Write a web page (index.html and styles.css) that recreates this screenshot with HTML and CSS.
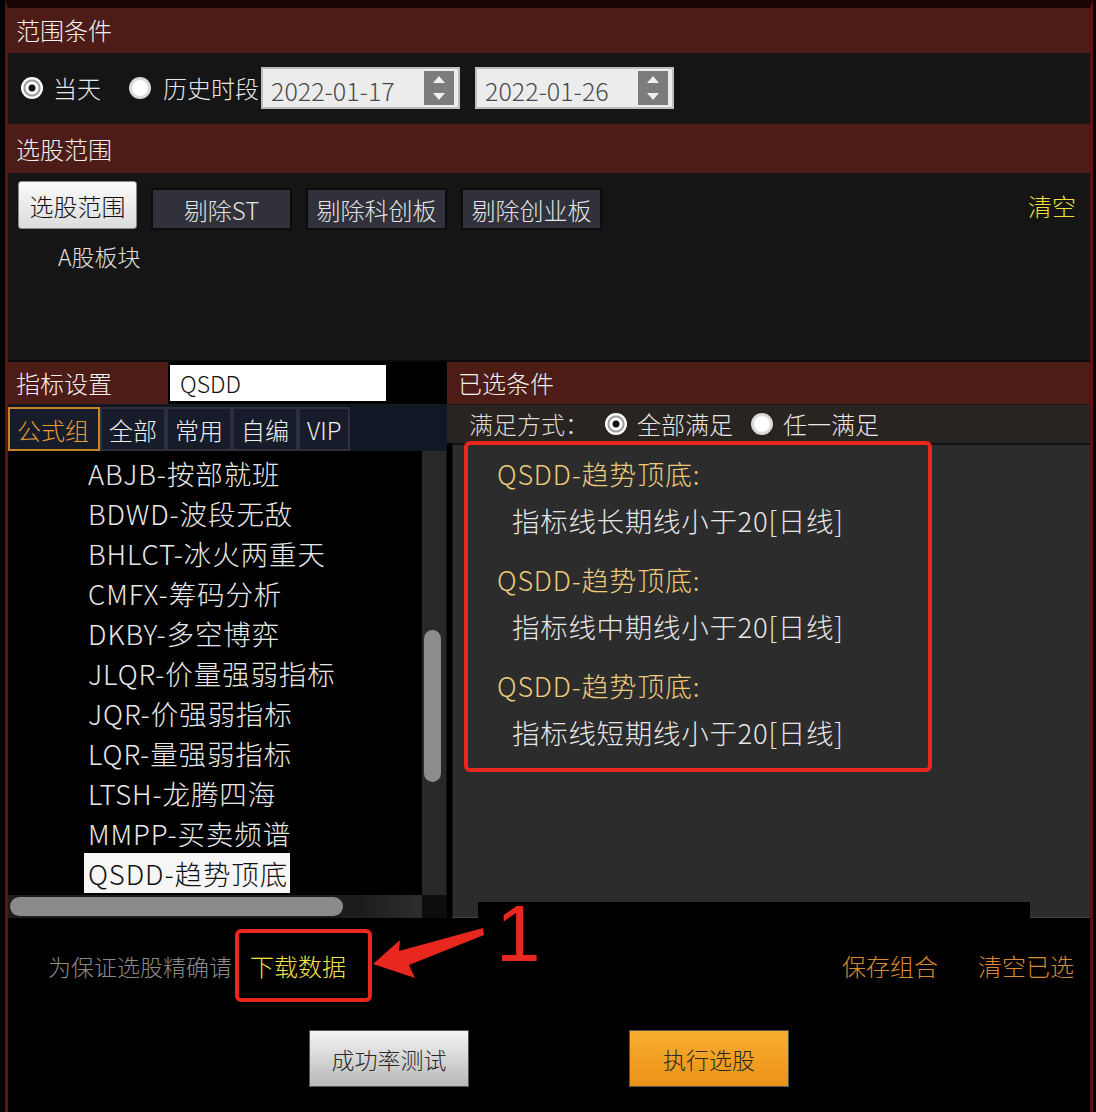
FILE: index.html
```html
<!DOCTYPE html>
<html lang="zh-CN">
<head>
    <meta charset="UTF-8">
    <meta name="viewport" content="width=device-width, initial-scale=1.0">
    <title>条件选股</title>
    <link rel="stylesheet" href="styles.css">
</head>
<body>
    <div class="frame">
        <div class="sec-head first">范围条件</div>
        <div class="date-row">
            <span class="radio on"></span><span class="radio-text">当天</span>
            <span class="radio"></span><span class="radio-text">历史时段</span>
            <div class="date">
                <span class="date-value">2022-01-17</span>
                <span class="spin"><i class="up"></i><i class="down"></i></span>
            </div>
            <div class="date">
                <span class="date-value">2022-01-26</span>
                <span class="spin"><i class="up"></i><i class="down"></i></span>
            </div>
        </div>

        <div class="sec-head">选股范围</div>
        <div class="range-body">
            <div class="btn-row">
                <button class="btn-light">选股范围</button>
                <button class="btn-dark">剔除ST</button>
                <button class="btn-dark">剔除科创板</button>
                <button class="btn-dark">剔除创业板</button>
                <span class="clear">清空</span>
            </div>
            <div class="board">A股板块</div>
        </div>

        <div class="split">
            <div class="left">
                <div class="ind-head">
                    <span class="ind-label">指标设置</span>
                    <div class="search">QSDD</div>
                </div>
                <div class="tabs">
                    <span class="tab active">公式组</span>
                    <span class="tab">全部</span>
                    <span class="tab">常用</span>
                    <span class="tab">自编</span>
                    <span class="tab">VIP</span>
                </div>
                <div class="list-wrap">
                    <ul class="list">
                        <li>ABJB-按部就班</li>
                        <li>BDWD-波段无敌</li>
                        <li>BHLCT-冰火两重天</li>
                        <li>CMFX-筹码分析</li>
                        <li>DKBY-多空博弈</li>
                        <li>JLQR-价量强弱指标</li>
                        <li>JQR-价强弱指标</li>
                        <li>LQR-量强弱指标</li>
                        <li>LTSH-龙腾四海</li>
                        <li>MMPP-买卖频谱</li>
                        <li><span class="selected">QSDD-趋势顶底</span></li>
                    </ul>
                    <div class="vscroll"><div class="vthumb"></div></div>
                </div>
                <div class="hscroll">
                    <div class="htrack"><div class="hthumb"></div></div>
                    <div class="corner"></div>
                </div>
            </div>

            <div class="right">
                <div class="sec-head">已选条件</div>
                <div class="mode">
                    <span class="mode-label">满足方式：</span>
                    <span class="radio on"></span><span class="radio-text">全部满足</span>
                    <span class="radio"></span><span class="radio-text">任一满足</span>
                </div>
                <div class="conds">
                    <div class="cond">
                        <div class="cond-name">QSDD-趋势顶底:</div>
                        <div class="cond-desc">指标线长期线小于20[日线]</div>
                    </div>
                    <div class="cond">
                        <div class="cond-name">QSDD-趋势顶底:</div>
                        <div class="cond-desc">指标线中期线小于20[日线]</div>
                    </div>
                    <div class="cond">
                        <div class="cond-name">QSDD-趋势顶底:</div>
                        <div class="cond-desc">指标线短期线小于20[日线]</div>
                    </div>
                </div>
                <div class="mark-box"></div>
            </div>
        </div>

        <div class="bottom">
            <div class="link-row">
                <span class="hint">为保证选股精确请</span>
                <span class="download">下载数据</span>
                <span class="link save">保存组合</span>
                <span class="link">清空已选</span>
            </div>
            <div class="action-row">
                <button class="btn-test">成功率测试</button>
                <button class="btn-run">执行选股</button>
            </div>

            <!-- annotation -->
            <div class="mark-cover"></div>
            <svg class="mark-arrow" width="120" height="60" viewBox="0 0 120 60">
                <polygon points="4,38 31,14 30,25 114,2 115,9 40,39 46,52" fill="#e8281e"/>
            </svg>
            <div class="mark-num">1</div>
        </div>
    </div>
</body>
</html>
```

FILE: styles.css
```css
body {
    margin: 0;
    background: #000;
    font-family: "Noto Sans CJK SC", "Microsoft YaHei", sans-serif;
    font-weight: 300;
    color: #e6e6e6;
}

.frame {
    position: relative;
    margin: 0 3px 0 5px;
    border-top: 8px solid #1c0605;
    border-left: 3px solid #5c130d;
    border-right: 3px solid #5c130d;
    height: 1104px;
    background: #000;
}

.sec-head {
    background: #4e1c16;
    height: 49px;
    line-height: 49px;
    padding-left: 8px;
    font-size: 24px;
    color: #f2f2f2;
}

.sec-head.first {
    height: 45px;
    line-height: 43px;
}

/* radio */
.radio {
    display: inline-block;
    width: 22px;
    height: 22px;
    border-radius: 50%;
    background: radial-gradient(circle, #fff 0 7px, #d8d8d8 9px 11px);
    flex-shrink: 0;
}

.radio.on {
    background: radial-gradient(circle, #111 0 3px, #fff 4px 6px, #9a9a9a 7px 8px, #fff 9px 11px);
}

.radio-text {
    font-size: 24px;
    line-height: 30px;
    margin-left: 10px;
    color: #e8e8e8;
}

.date-row {
    display: flex;
    align-items: center;
    height: 71px;
    background: #151515;
    padding-left: 13px;
    border-bottom: 1px solid #2a1210;
    box-sizing: border-box;
}

.date-row .radio-text {
    margin-right: 28px;
}

.date-row .radio-text + .radio + .radio-text {
    margin-left: 12px;
    margin-right: 2px;
}

.date {
    display: flex;
    align-items: center;
    width: 199px;
    height: 42px;
    box-sizing: border-box;
    border: 2px solid #bdbdbd;
    background: #ececec;
    margin-right: 15px;
    padding: 3px 4px 3px 8px;
}

.date-value {
    flex: 1;
    font-size: 25px;
    line-height: 32px;
    color: #4a4a4a;
    padding-top: 3px;
}

.spin {
    width: 30px;
    height: 34px;
    background: #7c7c7c;
    display: flex;
    flex-direction: column;
    align-items: center;
    justify-content: space-around;
}

.spin i {
    width: 0;
    height: 0;
    border-left: 6px solid transparent;
    border-right: 6px solid transparent;
}

.spin .up {
    border-bottom: 7px solid #f0f0f0;
}

.spin .down {
    border-top: 7px solid #f0f0f0;
}

.range-body {
    height: 189px;
    background: #151515;
    padding: 8px 0 0 10px;
    box-sizing: border-box;
    border-bottom: 2px solid #0a0a0a;
}

.btn-row {
    display: flex;
    align-items: flex-end;
    gap: 14px;
    padding-right: 14px;
}

.btn-row button {
    font-family: inherit;
    font-weight: 300;
    font-size: 24px;
    padding: 0;
    cursor: pointer;
}

.btn-light {
    width: 119px;
    height: 48px;
    border: 1px solid #888;
    border-radius: 3px;
    background: linear-gradient(#fafafa, #dcdcdc);
    color: #111;
}

.btn-dark {
    width: 141px;
    height: 42px;
    border: 2px solid #0c0c0c;
    background: #30313a;
    color: #e4e4e4;
    margin-bottom: -1px;
}

.clear {
    margin-left: auto;
    font-size: 24px;
    line-height: 36px;
    color: #f0e03a;
    align-self: center;
    margin-top: 2px;
}

.board {
    font-size: 23px;
    line-height: 30px;
    margin: 12px 0 0 40px;
    color: #e0e0e0;
}

.split {
    display: grid;
    grid-template-columns: 439px 1fr;
    height: 556px;
}

.left {
    display: flex;
    flex-direction: column;
    background: #000;
}

.ind-head {
    display: flex;
    height: 42px;
    background: #000;
}

.ind-label {
    width: 160px;
    background: #4e1c16;
    font-size: 24px;
    line-height: 42px;
    padding-left: 8px;
    box-sizing: border-box;
    color: #f2f2f2;
}

.search {
    width: 216px;
    height: 36px;
    margin: 3px 0 0 2px;
    background: #fff;
    color: #111;
    font-size: 23px;
    line-height: 36px;
    padding-left: 10px;
    box-sizing: border-box;
}

.tabs {
    display: flex;
    height: 47px;
    background: #111724;
    padding-top: 2px;
    box-sizing: border-box;
    border-top: 1px solid #1a1a1a;
}

.tab {
    height: 44px;
    line-height: 42px;
    box-sizing: border-box;
    border: 2px solid #2b303c;
    background: #161c29;
    font-size: 24px;
    color: #f0f0f0;
    padding: 0 7px;
}

.tab.active {
    border-color: #c88526;
    color: #e89a36;
    width: 92px;
}

.list-wrap {
    display: flex;
    height: 444px;
}

.list {
    flex: 1;
    list-style: none;
    margin: 0;
    padding: 2px 0 0 80px;
    overflow: hidden;
}

.list li {
    font-size: 27.5px;
    line-height: 40px;
    height: 40px;
    letter-spacing: 0.9px;
    color: #e8e8e8;
    white-space: nowrap;
}

.list .selected {
    display: inline-block;
    background: #f6f6f6;
    color: #111;
    padding: 0 2px 0 4px;
    margin-left: -4px;
    line-height: 40px;
}

.vscroll {
    width: 24px;
    background: #282828;
    position: relative;
    border-right: 1px solid #111;
}

.vthumb {
    position: absolute;
    left: 2px;
    top: 179px;
    width: 17px;
    height: 152px;
    border-radius: 9px;
    background: #8c8c8c;
}

.hscroll {
    display: flex;
    height: 23px;
    background: #000;
}

.htrack {
    flex: 1;
    background: linear-gradient(90deg, #1c1c1c 85%, #2e2e2e);
    padding: 2px 0 0 2px;
}

.hthumb {
    width: 333px;
    height: 19px;
    border-radius: 10px;
    background: #8a8a8a;
}

.corner {
    width: 25px;
    background: #0d0d0d;
}

.right {
    position: relative;
    display: flex;
    flex-direction: column;
    background: #000;
}

.right .sec-head {
    height: 42px;
    line-height: 42px;
    padding-left: 11px;
}

.mode {
    display: flex;
    align-items: center;
    height: 39px;
    background: #2a2420;
    padding-left: 22px;
    border-top: 1px solid #151515;
    box-sizing: border-box;
}

.mode-label {
    font-size: 24px;
    line-height: 30px;
    color: #dcdcdc;
    margin-right: 16px;
}

.mode .radio-text {
    margin-right: 18px;
    margin-left: 10px;
}

.conds {
    flex: 1;
    margin-left: 5px;
    background: #2c2c2c;
    border-top: 2px solid #111;
    border-left: 1px solid #151515;
    border-bottom: 1px solid #444;
    padding: 6px 0 0 44px;
}

.cond {
    margin-bottom: 14px;
}

.cond-name {
    font-size: 27px;
    line-height: 46px;
    letter-spacing: 0.8px;
    color: #eccb7c;
}

.cond-desc {
    font-size: 27.5px;
    line-height: 46px;
    letter-spacing: 0.7px;
    padding-left: 15px;
    color: #e6e6e6;
}

.mark-box {
    position: absolute;
    left: 17px;
    top: 79px;
    width: 468px;
    height: 331px;
    box-sizing: border-box;
    border: 4px solid #e8281e;
    border-radius: 6px;
}

.bottom {
    position: relative;
    flex: 1;
    background: #000;
}

.link-row {
    display: flex;
    align-items: center;
    height: 75px;
    padding: 10px 16px 0 40px;
}

.hint {
    font-size: 23px;
    color: #8a8a8a;
}

.download {
    margin-left: 3px;
    border: 4px solid #e8281e;
    border-radius: 6px;
    padding: 0 22px 0 11px;
    height: 73px;
    box-sizing: border-box;
    line-height: 65px;
    font-size: 24px;
    color: #f0e24a;
}

.link {
    font-size: 24px;
    color: #d98a2e;
}

.link.save {
    margin-left: auto;
    margin-right: 40px;
}

.action-row {
    display: flex;
    justify-content: center;
    gap: 160px;
    margin-top: 27px;
}

.action-row button {
    width: 160px;
    height: 57px;
    border: 1px solid #555;
    font-family: inherit;
    font-weight: 300;
    font-size: 23px;
    color: #2a2a2a;
    cursor: pointer;
}

.btn-test {
    background: linear-gradient(#f4f4f4, #b8b8b8);
}

.btn-run {
    background: linear-gradient(#f9ae2e, #ea9218);
    border-color: #8a5a10;
}

.mark-cover {
    position: absolute;
    left: 470px;
    top: -16px;
    width: 552px;
    height: 18px;
    background: #000;
}

.mark-arrow {
    position: absolute;
    left: 361px;
    top: 8px;
}

.mark-num {
    position: absolute;
    left: 488px;
    top: -24px;
    font-family: "Liberation Sans", Arial, sans-serif;
    font-weight: 400;
    font-size: 80px;
    line-height: 80px;
    color: #e8281e;
}
```
